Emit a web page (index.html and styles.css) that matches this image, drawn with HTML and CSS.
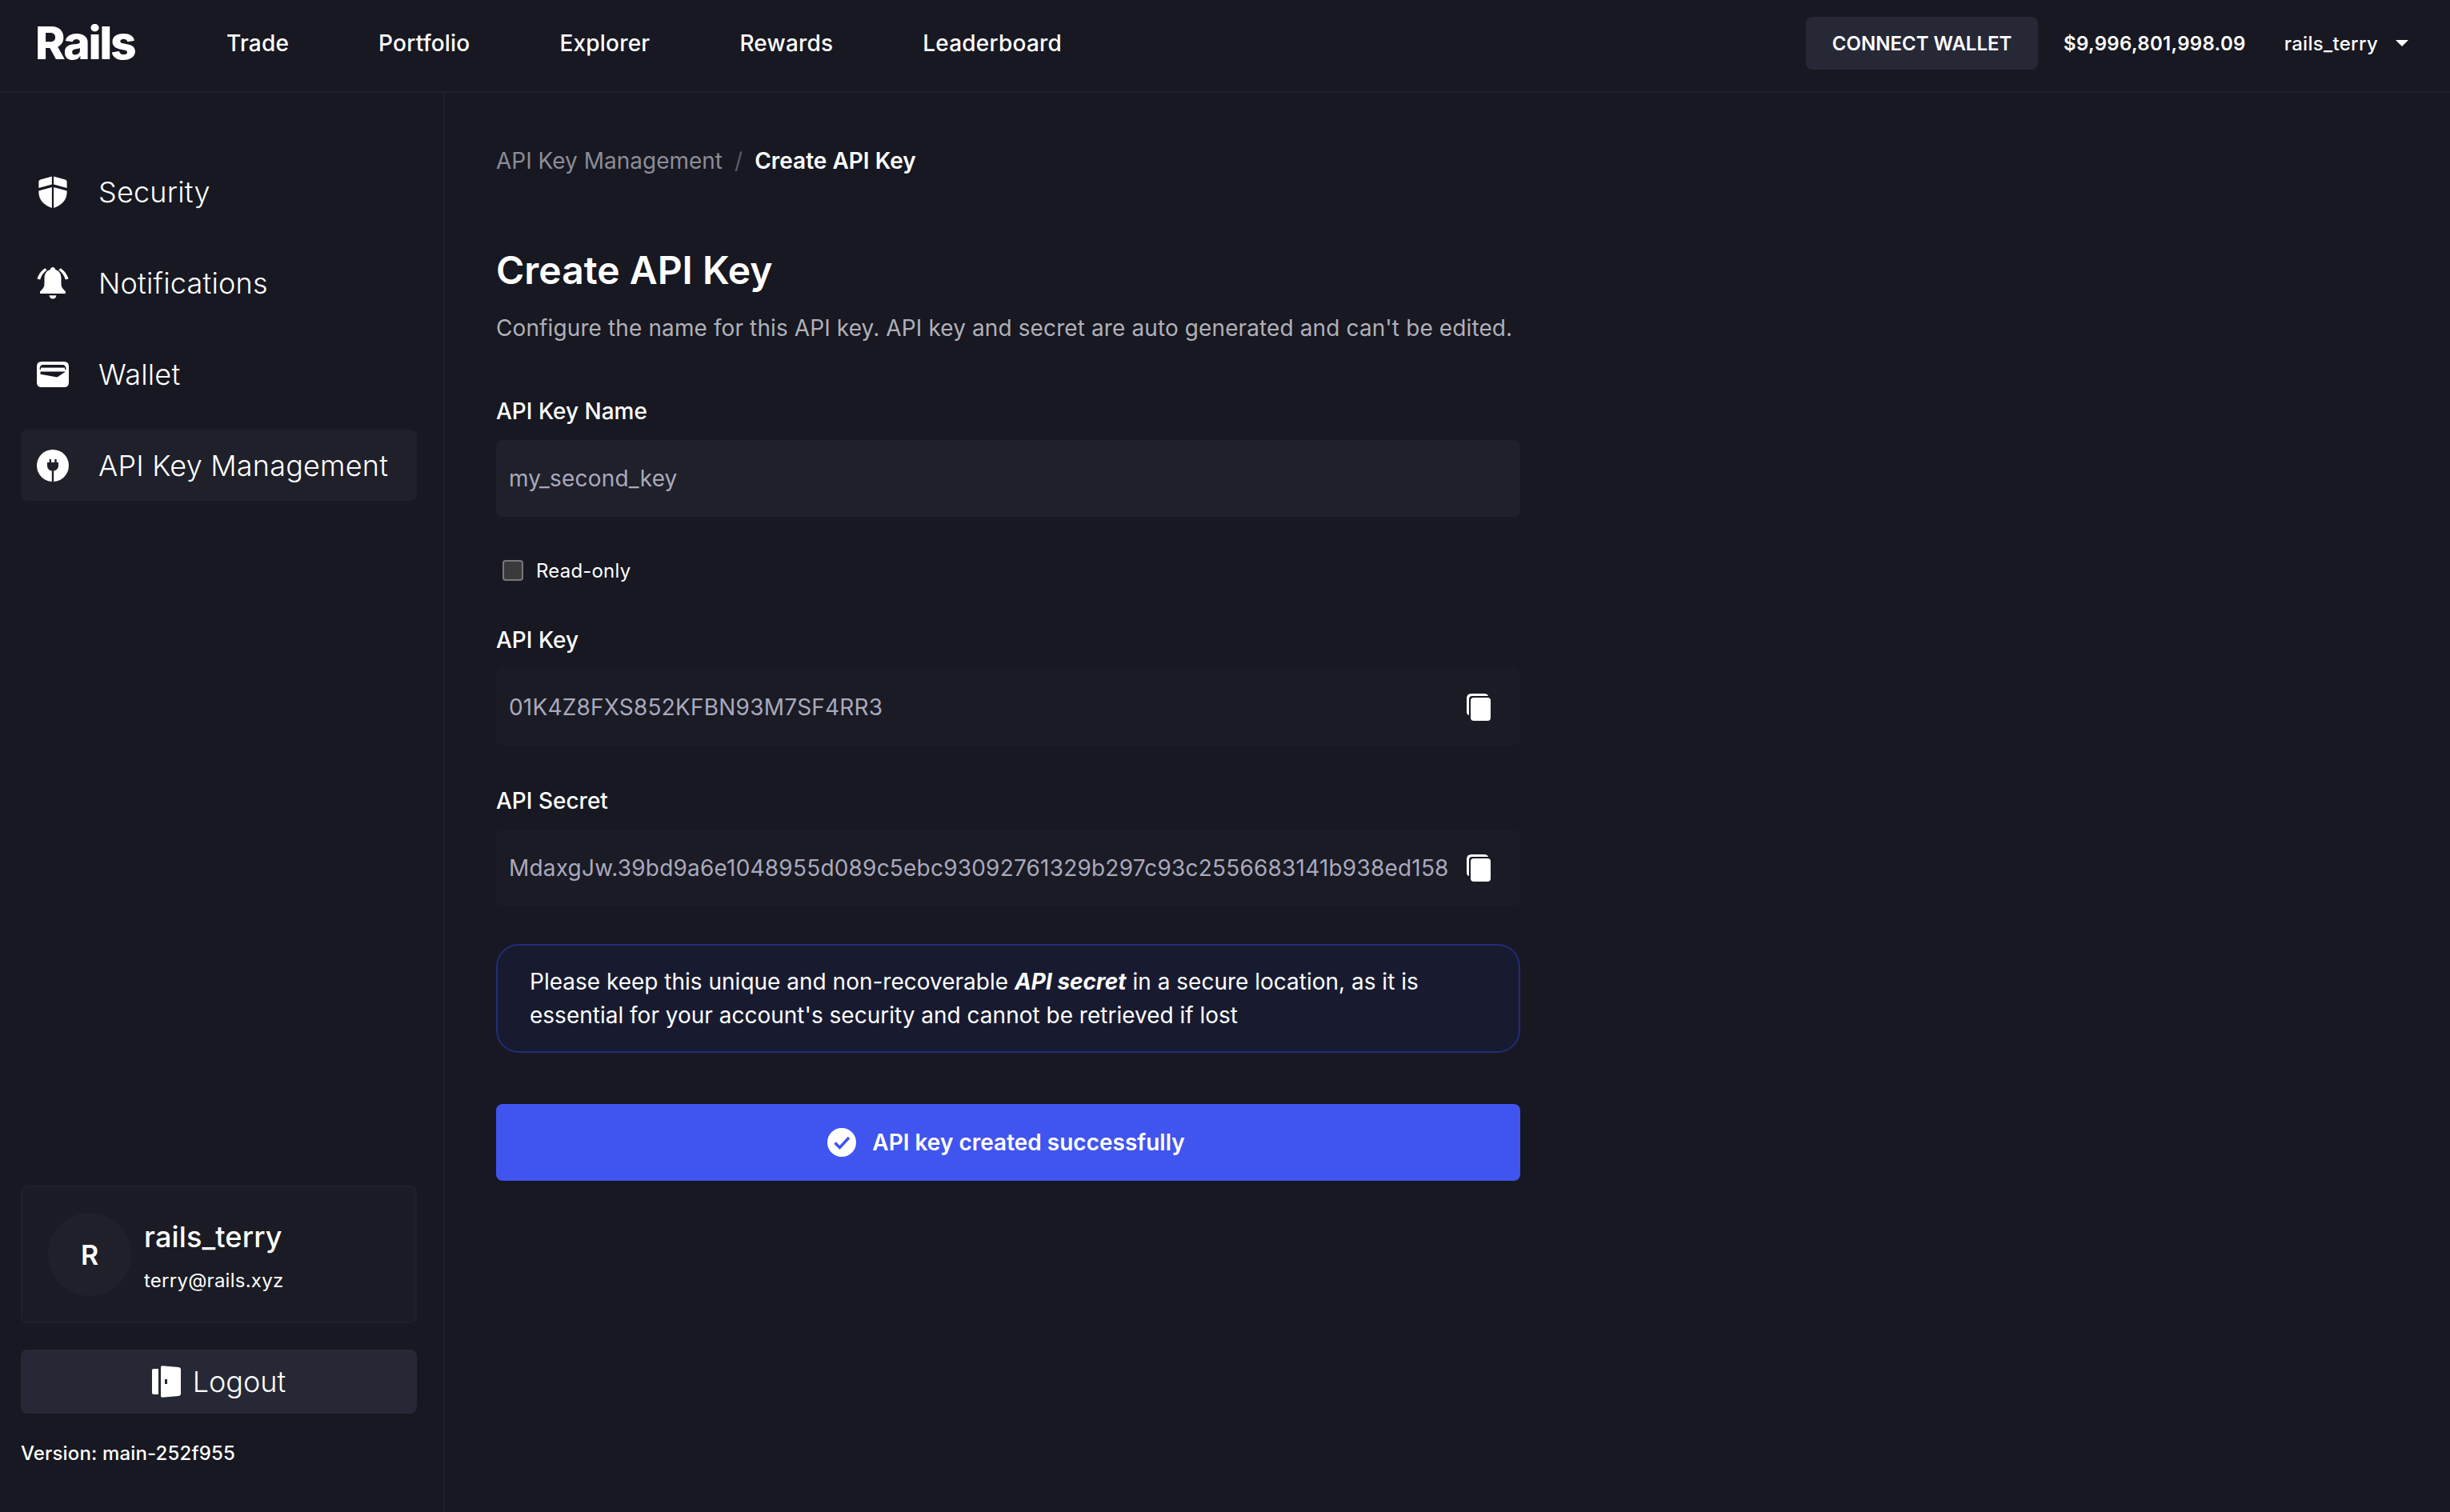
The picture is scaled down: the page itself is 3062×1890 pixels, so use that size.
FILE: index.html
```html
<!DOCTYPE html>
<html lang="en">
<head>
    <meta charset="UTF-8">
    <meta name="viewport" content="width=device-width, initial-scale=1.0">
    <title>Create API Key</title>
    <link rel="stylesheet" href="styles.css">
</head>
<body>
    <header class="topbar">
        <div class="topbar-left">
            <a class="logo" href="#">Rails</a>
            <nav class="topnav">
                <a href="#">Trade</a>
                <a href="#">Portfolio</a>
                <a href="#">Explorer</a>
                <a href="#">Rewards</a>
                <a href="#">Leaderboard</a>
            </nav>
        </div>
        <div class="topbar-right">
            <button class="connect-btn">CONNECT WALLET</button>
            <span class="balance">$9,996,801,998.09</span>
            <span class="user-menu">rails_terry<span class="caret"></span></span>
        </div>
    </header>

    <div class="layout">
        <aside class="sidebar">
            <nav class="sidenav">
                <a class="sidenav-item" href="#">
                    <svg class="sidenav-icon" viewBox="0 0 40 40" fill="#fff">
                        <path d="M18.9 0.5V10.5L2.4 15V7.2Q2.4 5 4.5 4.4Z"/>
                        <path d="M21.1 0.5V10.5L37.6 15V7.2Q37.6 5 35.5 4.4Z"/>
                        <path d="M18.9 14V40C9 36.5 2.4 30 2.4 20V18.6Z"/>
                        <path d="M21.1 14V40C31 36.5 37.6 30 37.6 20V18.6Z"/>
                    </svg>
                    <span>Security</span>
                </a>
                <a class="sidenav-item" href="#">
                    <svg class="sidenav-icon" viewBox="0 0 40 40" fill="#fff">
                        <path d="M20 0C22 0 23 1.4 23.2 3C28 4.4 30.5 8.5 30.5 13.5V21C30.5 25 32.5 27 36 30.5V33H4V30.5C7.5 27 9.5 25 9.5 21V13.5C9.5 8.5 12 4.4 16.8 3C17 1.4 18 0 20 0Z"/>
                        <path d="M15.5 35.2H24.5C24 38 22.5 39.5 20 39.5C17.5 39.5 16 38 15.5 35.2Z"/>
                        <path d="M10.2 1.2L12.6 3.4C8.6 6.5 5.6 10.5 4.2 15.5L0.4 14.6C2 9 5.4 4.6 10.2 1.2Z"/>
                        <path d="M29.8 1.2L27.4 3.4C31.4 6.5 34.4 10.5 35.8 15.5L39.6 14.6C38 9 34.6 4.6 29.8 1.2Z"/>
                    </svg>
                    <span>Notifications</span>
                </a>
                <a class="sidenav-item" href="#">
                    <svg class="sidenav-icon" viewBox="0 0 40 40">
                        <path fill="#fff" d="M6 4H34Q40 4 40 10V30Q40 36 34 36H6Q0 36 0 30V10Q0 4 6 4Z"/>
                        <path fill="#171821" d="M3.5 13.5Q3.5 8 8 8H32Q36.5 8 36.5 13.5V14H4.5Z"/>
                        <path fill="#171821" d="M4.5 16.6H36L25.5 23.4L4.5 19.8Z"/>
                        <path fill="#fff" d="M5 11.6H35V14H5Z"/>
                    </svg>
                    <span>Wallet</span>
                </a>
                <a class="sidenav-item active" href="#">
                    <svg class="sidenav-icon" viewBox="0 0 40 40">
                        <circle cx="20" cy="20" r="20" fill="#fff"/>
                        <path fill="#1f2029" d="M15.7 12H18V16H22.3V12H24.7V16H27V19.5C27 23.5 25 26 21.2 26.5V40H18.8V26.5C15 26 13 23.5 13 19.5V16H15.7Z"/>
                    </svg>
                    <span>API Key Management</span>
                </a>
            </nav>

            <div class="sidebar-bottom">
                <div class="profile-card">
                    <div class="avatar">R</div>
                    <div class="profile-text">
                        <div class="profile-name">rails_terry</div>
                        <div class="profile-email">terry@rails.xyz</div>
                    </div>
                </div>
                <button class="logout-btn">
                    <svg class="logout-icon" viewBox="0 0 36 40">
                        <path fill="#fff" d="M2 4H8V36H2Q0 36 0 34V6Q0 4 2 4Z"/>
                        <path fill="#fff" d="M11 2Q11 0 13 0.2L33 2Q36 2.3 36 5V35Q36 37.7 33 38L13 39.8Q11 40 11 38Z"/>
                        <rect x="16" y="17" width="3" height="6" fill="#262835"/>
                    </svg>
                    <span>Logout</span>
                </button>
                <div class="version">Version: main-252f955</div>
            </div>
        </aside>

        <main class="content">
            <div class="breadcrumb">
                <span class="crumb-link">API Key Management</span>
                <span class="crumb-sep">/</span>
                <span class="crumb-current">Create API Key</span>
            </div>

            <h1>Create API Key</h1>
            <p class="subtitle">Configure the name for this API key. API key and secret are auto generated and can't be edited.</p>

            <div class="form">
                <label class="field-label">API Key Name</label>
                <div class="field">my_second_key</div>

                <label class="check-row">
                    <span class="checkbox"></span>
                    <span>Read-only</span>
                </label>

                <label class="field-label">API Key</label>
                <div class="field readonly">
                    <span>01K4Z8FXS852KFBN93M7SF4RR3</span>
                    <svg class="copy-icon" viewBox="0 0 30 34">
                        <path fill="#fff" d="M6 0H22Q26 0 27 3H7Q3 3 3 7V27Q0 26 0 23V6Q0 0 6 0Z"/>
                        <path fill="#fff" d="M9 5H26Q30 5 30 9V30Q30 34 26 34H9Q5 34 5 30V9Q5 5 9 5Z"/>
                    </svg>
                </div>

                <label class="field-label">API Secret</label>
                <div class="field readonly">
                    <span>MdaxgJw.39bd9a6e1048955d089c5ebc93092761329b297c93c2556683141b938ed158</span>
                    <svg class="copy-icon" viewBox="0 0 30 34">
                        <path fill="#fff" d="M6 0H22Q26 0 27 3H7Q3 3 3 7V27Q0 26 0 23V6Q0 0 6 0Z"/>
                        <path fill="#fff" d="M9 5H26Q30 5 30 9V30Q30 34 26 34H9Q5 34 5 30V9Q5 5 9 5Z"/>
                    </svg>
                </div>

                <div class="notice">
                    Please keep this unique and non-recoverable <strong><em>API secret</em></strong> in a secure location, as it is essential for your account's security and cannot be retrieved if lost
                </div>

                <button class="submit-btn">
                    <svg class="check-icon" viewBox="0 0 36 36">
                        <circle cx="18" cy="18" r="18" fill="#fff"/>
                        <path d="M9.5 18.5L15.5 24.5L27 12" fill="none" stroke="#4054f0" stroke-width="3.6"/>
                    </svg>
                    <span>API key created successfully</span>
                </button>
            </div>
        </main>
    </div>
</body>
</html>
```

FILE: styles.css
```css
* {
    box-sizing: border-box;
    margin: 0;
    padding: 0;
}

html, body {
    height: 100%;
}

body {
    font-family: Inter, "Noto Sans", sans-serif;
    background-color: #171821;
    color: #fff;
    overflow: hidden;
}

a {
    color: inherit;
    text-decoration: none;
}

button {
    font-family: inherit;
    border: none;
    color: #fff;
}

/* top bar */
.topbar {
    display: flex;
    align-items: center;
    justify-content: space-between;
    height: 116px;
    padding: 0 52px 6px 44px;
    border-bottom: 2px solid #1f2029;
}

.topbar-left {
    display: flex;
    align-items: center;
}

.logo {
    width: 126px;
    margin-top: -2px;
    font-size: 57px;
    font-weight: 800;
    line-height: 1;
    letter-spacing: -2.3px;
    margin-right: 113px;
}

.topnav {
    display: flex;
    gap: 112px;
    font-size: 28px;
    font-weight: 500;
    letter-spacing: 0.2px;
}

.topbar-right {
    display: flex;
    align-items: center;
    font-size: 24px;
    font-weight: 600;
    letter-spacing: 0.3px;
}

.connect-btn {
    width: 290px;
    height: 66px;
    background-color: #262835;
    border-radius: 8px;
    font-size: 24px;
    font-weight: 600;
    margin-right: 32px;
}

.balance {
    margin-right: 48px;
}

.user-menu {
    display: flex;
    align-items: center;
    gap: 22px;
    font-weight: 500;
}

.caret {
    width: 0;
    height: 0;
    border-left: 8px solid transparent;
    border-right: 8px solid transparent;
    border-top: 8px solid #fff;
}

/* page layout */
.layout {
    display: flex;
    height: calc(100% - 116px);
}

.sidebar {
    display: flex;
    flex-direction: column;
    justify-content: space-between;
    width: 556px;
    padding: 79px 33px 59px 26px;
    border-right: 2px solid #1f2029;
}

.sidenav {
    display: flex;
    flex-direction: column;
    gap: 25px;
}

.sidenav-item {
    display: flex;
    align-items: center;
    gap: 37px;
    height: 89px;
    padding-left: 20px;
    border-radius: 8px;
    font-size: 36px;
    font-weight: 300;
    letter-spacing: 0.2px;
}

.sidenav-item.active {
    background-color: #1f2029;
}

.sidenav-icon {
    width: 40px;
    height: 40px;
    flex-shrink: 0;
}

.sidebar-bottom {
    display: flex;
    flex-direction: column;
}

.profile-card {
    display: flex;
    align-items: center;
    gap: 16px;
    height: 172px;
    padding-left: 32px;
    background-color: #1a1b24;
    border: 2px solid #1f2029;
    border-radius: 8px;
}

.avatar {
    display: flex;
    align-items: center;
    justify-content: center;
    width: 104px;
    height: 104px;
    border-radius: 50%;
    background-color: #1f2029;
    font-size: 34px;
    font-weight: 600;
}

.profile-text {
    padding-top: 2px;
}

.profile-name {
    font-size: 36px;
    font-weight: 500;
    letter-spacing: 0.15px;
    margin-bottom: 18px;
}

.profile-email {
    font-size: 24px;
    letter-spacing: 0.25px;
}

.logout-btn {
    display: flex;
    align-items: center;
    justify-content: center;
    gap: 15px;
    height: 80px;
    margin-top: 33px;
    background-color: #262835;
    border-radius: 8px;
    font-size: 36px;
    font-weight: 300;
}

.logout-icon {
    width: 36px;
    height: 40px;
}

.version {
    margin-top: 35px;
    font-size: 24px;
    font-weight: 500;
    letter-spacing: 0.15px;
}

/* main column */
.content {
    flex: 1;
    padding: 68px 0 0 64px;
}

.breadcrumb {
    display: flex;
    gap: 15px;
    font-size: 28px;
    line-height: 34px;
}

.crumb-link {
    color: #8c8c97;
}

.crumb-sep {
    color: #5c5c66;
}

.crumb-current {
    font-weight: 600;
}

h1 {
    margin-top: 90px;
    font-size: 48px;
    line-height: 60px;
    font-weight: 600;
}

.subtitle {
    margin-top: 25px;
    font-size: 28px;
    line-height: 34px;
    letter-spacing: 0.11px;
    color: #b0b0b8;
}

.form {
    width: 1280px;
    margin-top: 70px;
}

.field-label {
    display: block;
    font-size: 28px;
    line-height: 34px;
    font-weight: 500;
    margin-bottom: 19px;
}

.field {
    display: flex;
    align-items: center;
    justify-content: space-between;
    height: 96px;
    padding: 0 37px 0 16px;
    background-color: #1f2029;
    border-radius: 8px;
    font-size: 28px;
    letter-spacing: 0.2px;
    color: #a9a9bd;
}

.field.readonly {
    background-color: #1a1b24;
    margin-bottom: 52px;
}

.copy-icon {
    width: 30px;
    height: 34px;
    flex-shrink: 0;
}

.check-row {
    display: flex;
    align-items: center;
    gap: 16px;
    height: 26px;
    margin: 54px 0 57px 8px;
    font-size: 24px;
    font-weight: 400;
    letter-spacing: 0.2px;
}

.checkbox {
    width: 26px;
    height: 26px;
    background-color: #3a3a3c;
    border: 2px solid #77777b;
    border-radius: 4px;
}

.notice {
    height: 136px;
    margin-top: -5px;
    padding: 24px 40px 0;
    background-color: #181b30;
    border: 2px solid #232c7a;
    border-radius: 28px;
    font-size: 28px;
    line-height: 42px;
}

.notice strong {
    font-weight: 700;
}

.submit-btn {
    display: flex;
    align-items: center;
    justify-content: center;
    gap: 20px;
    width: 100%;
    height: 96px;
    margin-top: 64px;
    padding-right: 5px;
    background-color: #4054f0;
    border-radius: 8px;
    font-size: 28px;
    font-weight: 600;
}

.check-icon {
    width: 36px;
    height: 36px;
}
```
